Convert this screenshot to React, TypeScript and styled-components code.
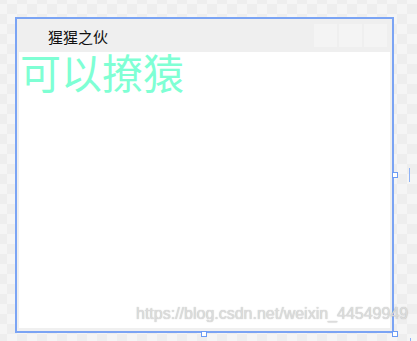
import React from "react";
import styled, { createGlobalStyle } from "styled-components";

const Global = createGlobalStyle`
  html, body { margin: 0; padding: 0; }
  body {
    width: 417px;
    height: 341px;
    overflow: hidden;
    background-color: #f5f5f5;
    background-image: conic-gradient(#eeeeee 25%, transparent 0 50%, #eeeeee 0 75%, transparent 0);
    background-size: 20px 20px;
    background-position: -3px 4px;
    font-family: "Noto Sans CJK SC", "Liberation Sans", sans-serif;
  }
`;

const Stage = styled.div`
  position: relative;
  width: 417px;
  height: 341px;
  padding: 17px 0 0 15px;
  box-sizing: border-box;
`;

const Frame = styled.div`
  position: relative;
  width: 379px;
  height: 316px;
  box-sizing: border-box;
  border: 2px solid #7ba4f4;
  background: #f0f0f0;
  display: flex;
  flex-direction: column;
`;

const TitleBar = styled.div`
  height: 33px;
  display: flex;
  align-items: center;
  padding: 0 5px 0 31px;
  background: #efefef;
  flex-shrink: 0;
`;

const Title = styled.span`
  flex: 1;
  font-size: 15px;
  line-height: 20px;
  color: #111;
  padding-top: 2px;
`;

const Buttons = styled.div`
  display: flex;
  gap: 2px;
`;

const WinButton = styled.div`
  width: 23px;
  height: 23px;
  background: #f4f4f4;
`;

const Body = styled.div`
  flex: 1;
  margin: 0 2px 3px 2px;
  background: #ffffff;
`;

const BigText = styled.div`
  font-size: 41px;
  line-height: 38px;
  color: #7fffd4;
  padding-left: 1px;
`;

const Handle = styled.div<{ $x: number; $y: number }>`
  position: absolute;
  left: ${(p) => p.$x}px;
  top: ${(p) => p.$y}px;
  width: 4px;
  height: 4px;
  border: 1px solid #6b9bf5;
  background: #fff;
`;

const Tick = styled.div<{ $x: number; $y: number; $h: number }>`
  position: absolute;
  left: ${(p) => p.$x}px;
  top: ${(p) => p.$y}px;
  width: 1px;
  height: ${(p) => p.$h}px;
  background: #8fb2f5;
`;

const Watermark = styled.div`
  position: absolute;
  left: 136px;
  top: 305px;
  font-family: "Liberation Sans", Arial, sans-serif;
  font-size: 16px;
  color: rgba(225, 225, 225, 0.9);
  text-shadow: 0 0 1px rgba(140, 140, 140, 0.7);
  white-space: nowrap;
`;

export default function App() {
  return (
    <>
      <Global />
      <Stage>
        <Frame>
          <TitleBar>
            <Title>猩猩之伙</Title>
            <Buttons>
              <WinButton />
              <WinButton />
              <WinButton />
            </Buttons>
          </TitleBar>
          <Body>
            <BigText>可以撩猿</BigText>
          </Body>
        </Frame>
        <Handle $x={392} $y={172} />
        <Handle $x={201} $y={331} />
        <Handle $x={392} $y={331} />
        <Tick $x={409} $y={168} $h={14} />
        <Tick $x={410} $y={338} $h={3} />
        <Watermark>https://blog.csdn.net/weixin_44549949</Watermark>
      </Stage>
    </>
  );
}
